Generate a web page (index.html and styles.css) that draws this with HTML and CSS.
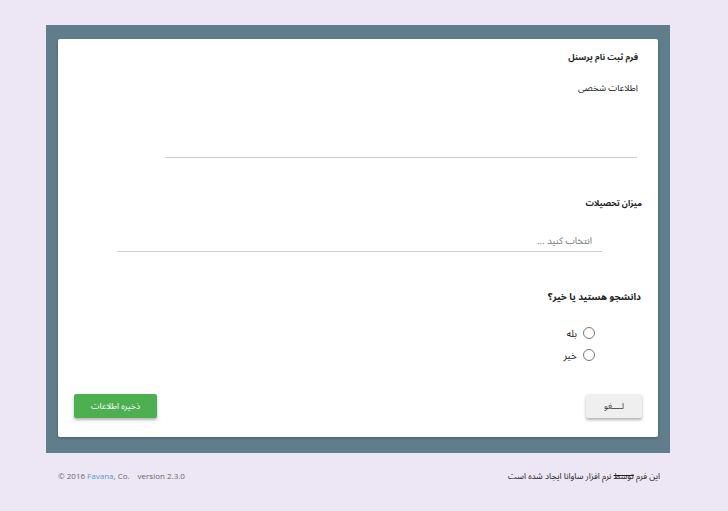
FILE: index.html
```html
<!DOCTYPE html>
<html lang="fa">
<head>
<meta charset="utf-8">
<link rel="stylesheet" href="styles.css">
</head>
<body>
<div class="panel">
  <div class="card" dir="rtl">
    <div class="title">فرم ثبت نام پرسنل</div>
    <div class="subtitle">اطلاعات شخصی</div>
    <div class="input-line"></div>

    <div class="label label-edu">میزان تحصیلات</div>
    <div class="select">انتخاب کنید ...</div>

    <div class="label label-student">دانشجو هستید یا خیر؟</div>
    <div class="radios">
      <div class="radio-row"><span class="radio"></span><span class="radio-text">بله</span></div>
      <div class="radio-row"><span class="radio"></span><span class="radio-text">خیر</span></div>
    </div>

    <div class="buttons">
      <button class="btn btn-cancel">لــــغو</button>
      <button class="btn btn-save">ذخیره اطلاعات</button>
    </div>
  </div>
</div>
<div class="footer">
  <div class="footer-left">© 2016 <span class="brand">Favana</span>, Co.<span class="version">version 2.3.0</span></div>
  <div class="footer-right" dir="rtl">این فرم <span class="strike">توسط</span> نرم افزار ساوانا ایجاد شده است</div>
</div>
</body>
</html>
```
FILE: styles.css
```css
html, body {
  margin: 0;
  padding: 0;
}
body {
  background: #ede6f4;
  font-family: "Noto Sans Arabic", "Noto Naskh Arabic", "DejaVu Sans", "Noto Sans", sans-serif;
  width: 728px;
  height: 511px;
  overflow: hidden;
}
.panel {
  margin: 25px 0 0 46px;
  width: 600px;
  padding: 14px 12px 16px 12px;
  background: #607d8b;
}
.card {
  background: #fff;
  border-radius: 2px;
  box-shadow: 0 1px 3px rgba(0,0,0,0.25);
  padding: 10px 0 19px 0;
  color: #222;
}
.title {
  font-size: 8.5px;
  font-weight: bold;
  line-height: 16px;
  padding-right: 20px;
}
.subtitle {
  margin-top: 16px;
  font-size: 9px;
  line-height: 16px;
  padding-right: 20px;
}
.input-line {
  height: 60px;
  border-bottom: 1px solid #cfcfcf;
  margin: 0 21px 0 107px;
}
.label {
  font-size: 8.5px;
  font-weight: bold;
  line-height: 16px;
  padding-right: 16px;
}
.label-edu {
  margin-top: 38px;
  font-size: 8.3px;
}
.select {
  margin: 19px 56px 0 59px;
  height: 20px;
  line-height: 20px;
  border-bottom: 1px solid #cfcfcf;
  font-size: 9.5px;
  color: #777;
  padding-right: 10px;
}
.label-student {
  margin-top: 37px;
  padding-right: 17px;
  font-size: 9.5px;
}
.radios {
  margin-top: 19px;
  padding-right: 63px;
  display: flex;
  flex-direction: column;
  gap: 4px;
}
.radio-row {
  display: flex;
  align-items: center;
  height: 18px;
  gap: 6px;
}
.radio {
  width: 10px;
  height: 10px;
  border: 1px solid #777;
  border-radius: 50%;
}
.radio-text {
  font-size: 10px;
  color: #222;
}
.buttons {
  margin-top: 30px;
  padding: 0 16px;
  display: flex;
  justify-content: space-between;
}
.btn {
  border: none;
  border-radius: 2px;
  height: 24px;
  font-family: "Noto Sans Arabic", "DejaVu Sans", sans-serif;
  font-size: 8.5px;
  box-shadow: 0 2px 3px rgba(0,0,0,0.3);
  padding: 0;
}
.btn-cancel {
  width: 56px;
  background: #f0efef;
  color: #333;
}
.btn-save {
  width: 83px;
  background: #4caf50;
  color: #fff;
}
.footer {
  margin-top: 17px;
  padding: 0 68px 0 58px;
  display: flex;
  justify-content: space-between;
  align-items: center;
  line-height: 12px;
}
.footer-left {
  font-family: "Open Sans", sans-serif;
  font-size: 8px;
  color: #666;
}
.brand {
  color: #4f9fcf;
}
.version {
  margin-left: 8px;
}
.footer-right {
  font-size: 8.5px;
  color: #222;
}
.strike {
  text-decoration: line-through;
}
```
